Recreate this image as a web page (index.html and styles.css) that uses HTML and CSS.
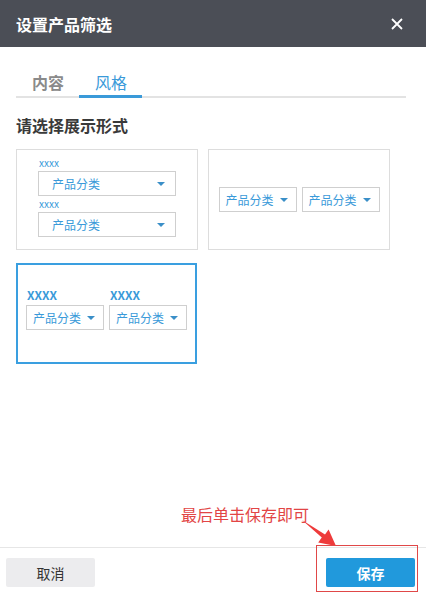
FILE: index.html
```html
<!DOCTYPE html>
<html lang="zh-CN">
<head>
    <meta charset="UTF-8">
    <title>设置产品筛选</title>
    <link rel="stylesheet" href="styles.css">
</head>
<body>
    <div class="dialog">
        <div class="dialog-header">
            <span class="dialog-title">设置产品筛选</span>
            <span class="close-btn">
                <svg width="12" height="12" viewBox="0 0 12 12"><path d="M1 1L11 11M11 1L1 11" stroke="#fff" stroke-width="1.8"/></svg>
            </span>
        </div>

        <div class="dialog-body">
            <div class="tabs">
                <div class="tab">内容</div>
                <div class="tab active">风格</div>
            </div>

            <h3 class="section-title">请选择展示形式</h3>

            <div class="style-grid">
                <div class="style-card stacked">
                    <div class="field">
                        <div class="field-label">xxxx</div>
                        <div class="select wide"><span>产品分类</span><i class="caret"></i></div>
                    </div>
                    <div class="field">
                        <div class="field-label">xxxx</div>
                        <div class="select wide"><span>产品分类</span><i class="caret"></i></div>
                    </div>
                </div>

                <div class="style-card inline">
                    <div class="select"><span>产品分类</span><i class="caret"></i></div>
                    <div class="select"><span>产品分类</span><i class="caret"></i></div>
                </div>

                <div class="style-card labeled selected">
                    <div class="field">
                        <div class="field-label big">XXXX</div>
                        <div class="select"><span>产品分类</span><i class="caret"></i></div>
                    </div>
                    <div class="field">
                        <div class="field-label big">XXXX</div>
                        <div class="select"><span>产品分类</span><i class="caret"></i></div>
                    </div>
                </div>
            </div>
        </div>

        <div class="dialog-footer">
            <button class="btn btn-cancel">取消</button>
            <button class="btn btn-save">保存</button>
        </div>
    </div>

    <!-- annotation overlay -->
    <div class="note-text">最后单击保存即可</div>
    <svg class="note-arrow" width="60" height="45" viewBox="0 0 60 45">
        <polygon points="12,10 31.8,27.6 28.2,32.6 46,36 38.6,19.4 35,24.6" fill="#ee3b3b"/>
    </svg>
    <div class="note-box"></div>
</body>
</html>
```

FILE: styles.css
```css
html, body {
    margin: 0;
    padding: 0;
}
body {
    width: 426px;
    height: 593px;
    position: relative;
    overflow: hidden;
    font-family: "Noto Sans CJK SC", "Liberation Sans", sans-serif;
    background-color: #fff;
}
.dialog {
    height: 593px;
    display: flex;
    flex-direction: column;
}
.dialog-header {
    height: 47px;
    flex-shrink: 0;
    background-color: #4b4e56;
    display: flex;
    align-items: center;
    justify-content: space-between;
    padding: 0 23px 0 16px;
}
.dialog-title {
    color: #fff;
    font-size: 16px;
    font-weight: bold;
    line-height: 20px;
}
.close-btn {
    display: flex;
    width: 12px;
    height: 12px;
}
.dialog-body {
    flex: 1;
    padding: 0 20px 0 16px;
}
.tabs {
    display: flex;
    margin-top: 23px;
    border-bottom: 2px solid #e3e3e3;
}
.tab {
    padding: 0 15px 0 16px;
    font-size: 16px;
    line-height: 25px;
    color: #8a8a8a;
    font-weight: bold;
}
.tab.active {
    color: #3a9ad9;
    font-weight: normal;
    border-bottom: 3px solid #3a9ad9;
    margin-bottom: -2px;
}
.section-title {
    margin: 17px 0 14px;
    font-size: 16px;
    line-height: 20px;
    color: #3a3a3a;
    font-weight: bold;
}
.style-grid {
    display: grid;
    grid-template-columns: 182px 182px;
    grid-auto-rows: 101px;
    column-gap: 10px;
    row-gap: 13px;
}
.style-card {
    box-sizing: border-box;
    border: 1px solid #ddd;
    background-color: #fff;
}
.style-card.selected {
    border: 2px solid #3a9fe0;
    width: 181px;
}
.stacked {
    padding: 7px 0 0 21px;
}
.stacked .field-label {
    font-size: 10px;
    line-height: 12px;
    height: 12px;
    margin-bottom: 2px;
}
.stacked .field + .field {
    margin-top: 2px;
}
.inline {
    display: flex;
    align-items: center;
    justify-content: center;
    gap: 5px;
}
.labeled {
    display: flex;
    align-items: flex-start;
    gap: 5px;
    padding: 23px 0 0 8px;
}
.field-label {
    color: #3a9ad9;
    padding-left: 1px;
}
.field-label.big {
    font-size: 12px;
    line-height: 14px;
    font-weight: bold;
    margin-bottom: 3px;
}
.select {
    box-sizing: border-box;
    width: 78px;
    height: 25px;
    border: 1px solid #cfcfcf;
    display: flex;
    align-items: center;
    justify-content: space-between;
    padding: 0 8px 0 6px;
    font-size: 12px;
    color: #3a9ad9;
}
.select.wide {
    width: 138px;
    padding: 0 10px 0 13px;
}
.caret {
    width: 0;
    height: 0;
    border-left: 4px solid transparent;
    border-right: 4px solid transparent;
    border-top: 4px solid #3a8fc8;
}
.dialog-footer {
    flex-shrink: 0;
    height: 46px;
    box-sizing: border-box;
    border-top: 1px solid #e6e6e6;
    display: flex;
    justify-content: space-between;
    align-items: flex-start;
    padding: 10px 11px 0 6px;
}
.btn {
    width: 89px;
    height: 29px;
    border: none;
    border-radius: 2px;
    font-family: inherit;
    font-size: 14px;
    padding: 0;
}
.btn-cancel {
    background-color: #ececee;
    color: #333;
}
.btn-save {
    background-color: #2199dc;
    color: #fff;
    font-weight: bold;
}
.note-text {
    position: absolute;
    left: 181px;
    top: 504px;
    font-size: 16px;
    line-height: 20px;
    color: #e24545;
}
.note-arrow {
    position: absolute;
    left: 290px;
    top: 510px;
}
.note-box {
    position: absolute;
    left: 316px;
    top: 545px;
    width: 100px;
    height: 45px;
    border: 1px solid #e04848;
}
```
